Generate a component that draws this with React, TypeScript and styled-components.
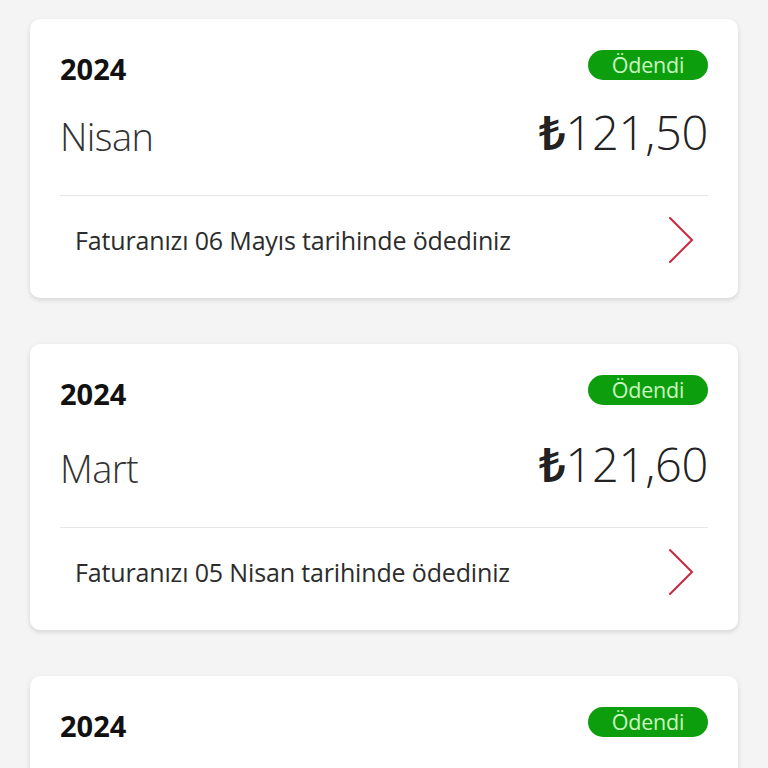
import React from "react";
import styled, { createGlobalStyle } from "styled-components";

const GlobalStyle = createGlobalStyle`
  * { box-sizing: border-box; }
  html, body { margin: 0; padding: 0; background: #f4f4f4; }
  body { font-family: "Open Sans", "Noto Sans", sans-serif; }
`;

const Page = styled.div`
  display: flex;
  flex-direction: column;
  gap: 46px;
  padding: 19px 30px 0 30px;
  height: 768px;
  overflow: hidden;
`;

const Card = styled.div`
  background: #ffffff;
  border-radius: 10px;
  box-shadow: 0 2px 5px rgba(0, 0, 0, 0.13);
  padding: 0 30px 14px 30px;
  flex-shrink: 0;
`;

const Header = styled.div`
  display: flex;
  justify-content: space-between;
  align-items: flex-start;
  margin-top: 31px;
  height: 30px;
`;

const Year = styled.div`
  font-size: 29px;
  font-weight: 700;
  color: #111;
  line-height: 30px;
  margin-top: 4px;
`;

const Badge = styled.div`
  height: 30px;
  width: 120px;
  border-radius: 15px;
  background: #0d9e0d;
  color: #c9f7c0;
  font-size: 21.5px;
  line-height: 30px;
  text-align: center;
  letter-spacing: -0.2px;
`;

const Main = styled.div<{ $extra: number }>`
  display: flex;
  justify-content: space-between;
  align-items: center;
  margin-top: ${(p) => 22 + p.$extra}px;
  height: 60px;
`;

const Month = styled.div`
  font-size: 38px;
  font-weight: 300;
  color: #333;
  line-height: 60px;
  padding-top: 8px;
  letter-spacing: -0.6px;
`;

const Amount = styled.div`
  font-size: 47px;
  font-weight: 300;
  color: #222;
  line-height: 60px;
  letter-spacing: -0.3px;
`;

const Lira = styled.span`
  font-weight: 600;
`;

const Divider = styled.div`
  height: 1px;
  background: #e6e6e6;
  margin-top: 33px;
`;

const Footer = styled.div`
  display: flex;
  justify-content: space-between;
  align-items: center;
  height: 88px;
  padding: 0 14px 0 15px;
`;

const Note = styled.div`
  font-size: 25px;
  color: #2c2c2c;
  letter-spacing: -0.15px;
`;

const Chevron = () => (
  <svg width="26" height="48" viewBox="0 0 26 48" fill="none">
    <polyline
      points="2,2 24,24 2,46"
      stroke="#c8283a"
      strokeWidth="2"
      strokeLinecap="round"
      strokeLinejoin="miter"
    />
  </svg>
);

type Bill = { year: string; month: string; amount: string; note: string; extra: number };

const bills: Bill[] = [
  { year: "2024", month: "Nisan", amount: "121,50", note: "Faturanızı 06 Mayıs tarihinde ödediniz", extra: 0 },
  { year: "2024", month: "Mart", amount: "121,60", note: "Faturanızı 05 Nisan tarihinde ödediniz", extra: 7 },
  { year: "2024", month: "Şubat", amount: "121,60", note: "Faturanızı 05 Mart tarihinde ödediniz", extra: 7 },
];

export default function App() {
  return (
    <>
      <GlobalStyle />
      <Page>
        {bills.map((b, i) => (
          <Card key={i}>
            <Header>
              <Year>{b.year}</Year>
              <Badge>Ödendi</Badge>
            </Header>
            <Main $extra={b.extra}>
              <Month>{b.month}</Month>
              <Amount>
                <Lira>₺</Lira>
                {b.amount}
              </Amount>
            </Main>
            <Divider />
            <Footer>
              <Note>{b.note}</Note>
              <Chevron />
            </Footer>
          </Card>
        ))}
      </Page>
    </>
  );
}
